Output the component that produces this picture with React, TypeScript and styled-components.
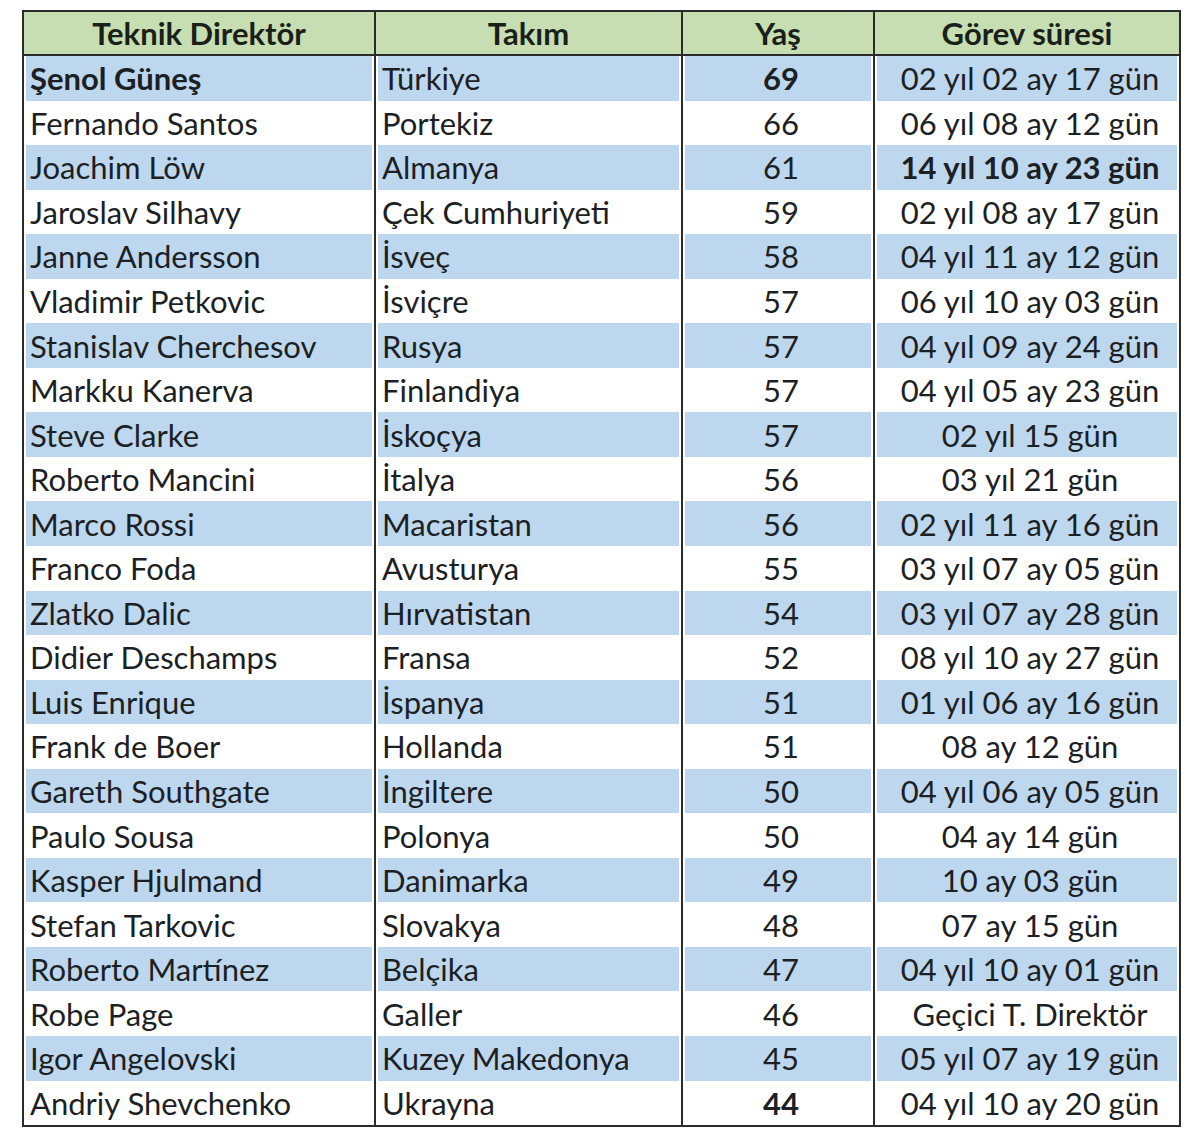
import styled, { createGlobalStyle } from 'styled-components';

const GlobalStyle = createGlobalStyle`
  body {
    margin: 0;
    background: #ffffff;
    font-family: Lato, "Open Sans", sans-serif;
  }
`;

const Page = styled.div`
  padding: 10px 0 0 22px;
  width: 1200px;
  height: 1140px;
  box-sizing: border-box;
`;

const Table = styled.div`
  display: grid;
  grid-template-columns: 352px 307px 192px 304px;
  width: 1159px;
  box-sizing: border-box;
  border: 2px solid #2b2b2b;
`;

const HeadCell = styled.div<{ $last?: boolean }>`
  height: 42px;
  display: flex;
  align-items: center;
  justify-content: center;
  background: #c6deb2;
  border-bottom: 2px solid #2b2b2b;
  border-right: ${p => (p.$last ? 'none' : '2px solid #2b2b2b')};
  font-weight: 700;
  font-size: 31px;
  color: #1a1f1a;
`;

const Cell = styled.div<{ $shade: boolean; $center?: boolean; $bold?: boolean; $last?: boolean }>`
  height: 44.55px;
  display: flex;
  align-items: center;
  justify-content: ${p => (p.$center ? 'center' : 'flex-start')};
  padding: 0 0 0 6px;
  box-sizing: border-box;
  background: ${p => (p.$shade ? '#bdd7ee' : '#ffffff')};
  box-shadow: inset 2px 0 0 #fff, inset -2px 0 0 #fff;
  border-right: ${p => (p.$last ? 'none' : '2px solid #2b2b2b')};
  font-size: 31px;
  font-weight: ${p => (p.$bold ? 700 : 400)};
  color: #1c1f24;
  white-space: nowrap;
`;

type Row = {
  name: string;
  team: string;
  age: string;
  term: string;
  boldName?: boolean;
  boldAge?: boolean;
  boldTerm?: boolean;
};

const rows: Row[] = [
  { name: 'Şenol Güneş', team: 'Türkiye', age: '69', term: '02 yıl 02 ay 17 gün', boldName: true, boldAge: true },
  { name: 'Fernando Santos', team: 'Portekiz', age: '66', term: '06 yıl 08 ay 12 gün' },
  { name: 'Joachim Löw', team: 'Almanya', age: '61', term: '14 yıl 10 ay 23 gün', boldTerm: true },
  { name: 'Jaroslav Silhavy', team: 'Çek Cumhuriyeti', age: '59', term: '02 yıl 08 ay 17 gün' },
  { name: 'Janne Andersson', team: 'İsveç', age: '58', term: '04 yıl 11 ay 12 gün' },
  { name: 'Vladimir Petkovic', team: 'İsviçre', age: '57', term: '06 yıl 10 ay 03 gün' },
  { name: 'Stanislav Cherchesov', team: 'Rusya', age: '57', term: '04 yıl 09 ay 24 gün' },
  { name: 'Markku Kanerva', team: 'Finlandiya', age: '57', term: '04 yıl 05 ay 23 gün' },
  { name: 'Steve Clarke', team: 'İskoçya', age: '57', term: '02 yıl 15 gün' },
  { name: 'Roberto Mancini', team: 'İtalya', age: '56', term: '03 yıl 21 gün' },
  { name: 'Marco Rossi', team: 'Macaristan', age: '56', term: '02 yıl 11 ay 16 gün' },
  { name: 'Franco Foda', team: 'Avusturya', age: '55', term: '03 yıl 07 ay 05 gün' },
  { name: 'Zlatko Dalic', team: 'Hırvatistan', age: '54', term: '03 yıl 07 ay 28 gün' },
  { name: 'Didier Deschamps', team: 'Fransa', age: '52', term: '08 yıl 10 ay 27 gün' },
  { name: 'Luis Enrique', team: 'İspanya', age: '51', term: '01 yıl 06 ay 16 gün' },
  { name: 'Frank de Boer', team: 'Hollanda', age: '51', term: '08 ay 12 gün' },
  { name: 'Gareth Southgate', team: 'İngiltere', age: '50', term: '04 yıl 06 ay 05 gün' },
  { name: 'Paulo Sousa', team: 'Polonya', age: '50', term: '04 ay 14 gün' },
  { name: 'Kasper Hjulmand', team: 'Danimarka', age: '49', term: '10 ay 03 gün' },
  { name: 'Stefan Tarkovic', team: 'Slovakya', age: '48', term: '07 ay 15 gün' },
  { name: 'Roberto Martínez', team: 'Belçika', age: '47', term: '04 yıl 10 ay 01 gün' },
  { name: 'Robe Page', team: 'Galler', age: '46', term: 'Geçici T. Direktör' },
  { name: 'Igor Angelovski', team: 'Kuzey Makedonya', age: '45', term: '05 yıl 07 ay 19 gün' },
  { name: 'Andriy Shevchenko', team: 'Ukrayna', age: '44', term: '04 yıl 10 ay 20 gün', boldAge: true },
];

export default function App() {
  return (
    <Page>
      <GlobalStyle />
      <Table>
        <HeadCell>Teknik Direktör</HeadCell>
        <HeadCell>Takım</HeadCell>
        <HeadCell>Yaş</HeadCell>
        <HeadCell $last>Görev süresi</HeadCell>
        {rows.map((r, i) => {
          const shade = i % 2 === 0;
          return [
            <Cell key={`n${i}`} $shade={shade} $bold={r.boldName}>{r.name}</Cell>,
            <Cell key={`t${i}`} $shade={shade}>{r.team}</Cell>,
            <Cell key={`a${i}`} $shade={shade} $center $bold={r.boldAge}>{r.age}</Cell>,
            <Cell key={`g${i}`} $shade={shade} $center $bold={r.boldTerm} $last>{r.term}</Cell>,
          ];
        })}
      </Table>
    </Page>
  );
}
